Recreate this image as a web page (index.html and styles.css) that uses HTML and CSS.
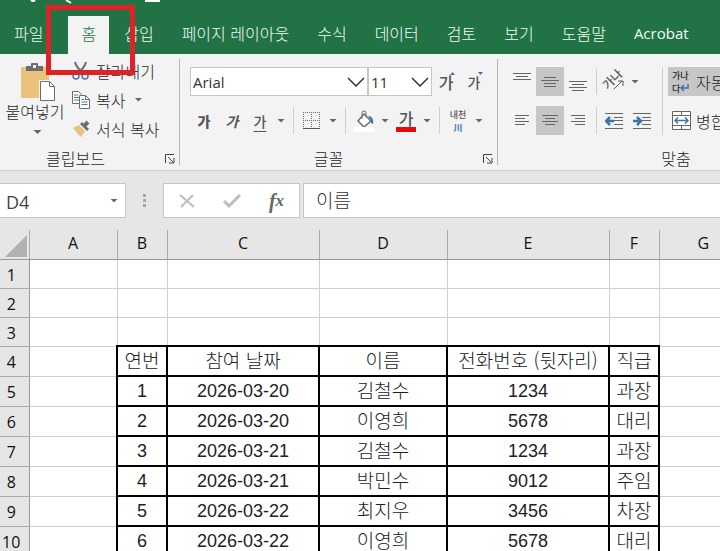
FILE: index.html
```html
<!DOCTYPE html>
<html lang="ko">
<head>
  <meta charset="UTF-8" />
  <meta name="viewport" content="width=device-width, initial-scale=1" />
  <title>참여 명단</title>
  <link rel="stylesheet" href="styles.css">
</head>
<body>

<header class="titlebar">
  <svg class="quick" width="170" height="4" viewBox="0 0 170 4">
    <path d="M31 0q2 2 4 0M66 0l5 3M145 1h15" fill="none" stroke="#fff" stroke-width="2"/>
  </svg>
  <nav class="tabs">
    <a href="#" class="file">파일</a>
    <a href="#" class="active">홈</a>
    <a href="#">삽입</a>
    <a href="#">페이지 레이아웃</a>
    <a href="#">수식</a>
    <a href="#">데이터</a>
    <a href="#">검토</a>
    <a href="#">보기</a>
    <a href="#">도움말</a>
    <a href="#">Acrobat</a>
    <svg width="14" height="20" viewBox="0 0 14 20"><path d="M5 16v-3Q1 10 1 6.500a5.500 5.500 0 0 1 11 0Q12 10 8 13v3z" fill="none" stroke="#fff" stroke-width="1.500"/></svg>
  </nav>
</header>
<div class="highlight"></div>

<section class="ribbon">
  <div class="group clipboard">
    <div class="body">
      <button class="paste">
        <svg width="36" height="40" viewBox="0 0 36 40">
          <rect x="1" y="5" width="28" height="31" rx="1" fill="#eac27a"/>
          <path d="M6 4h5V2q0-1 1-1h5q1 0 1 1v2h5v5H6z" fill="#6d6d6d"/>
          <rect x="13" y="3" width="3" height="3" fill="#f3f3f3"/>
          <path d="M19 18h11l6 6v15H19z" fill="#f3f3f3"/>
          <path d="M20.500 19.500h9l5 5v14h-14z" fill="#fff" stroke="#6d6d6d"/>
          <path d="M29.500 19.500v5h5" fill="none" stroke="#6d6d6d"/>
        </svg>
        <span>붙여넣기</span>
        <i class="arrow"></i>
      </button>
      <div class="stack">
        <button>
          <svg width="18" height="20" viewBox="0 0 18 20">
            <path d="M3 1q1 5 8 11M14 1q-1 5-8 11" fill="none" stroke="#6d6d6d" stroke-width="2"/>
            <circle cx="4" cy="15" r="3" fill="none" stroke="#4a78a8" stroke-width="1.500"/>
            <circle cx="13" cy="15" r="3" fill="none" stroke="#4a78a8" stroke-width="1.500"/>
          </svg>
          <span>잘라내기</span>
        </button>
        <button>
          <svg width="18" height="20" viewBox="0 0 18 20">
            <path d="M.500 1.500h6l3 3v9h-9z" fill="#fff" stroke="#6d6d6d"/>
            <path d="M2 5h4M2 7.500h5M2 10h5" stroke="#4a78a8"/>
            <path d="M7.500 5.500h6l4 4v9h-10z" fill="#fff" stroke="#6d6d6d"/>
            <path d="M13.500 5.500v4h4" fill="none" stroke="#6d6d6d"/>
            <path d="M9.500 9.500h3M9.500 12h6M9.500 14.500h6" stroke="#4a78a8"/>
          </svg>
          <span>복사</span>
          <i class="arrow"></i>
        </button>
        <button>
          <svg width="18" height="20" viewBox="0 0 18 20">
            <path d="M1 9l6-3 6 6-4 6-3-3z" fill="#eac27a"/>
            <path d="M8 5l2-2 7 7-2 2z" fill="#6d6d6d"/>
            <path d="M12 7l4-4" stroke="#6d6d6d" stroke-width="4"/>
          </svg>
          <span>서식 복사</span>
        </button>
      </div>
    </div>
    <footer>
      <span>클립보드</span>
      <button class="launcher" aria-label="클립보드"><svg width="10" height="10" viewBox="0 0 10 10"><path d="M.500 9V.500H9M3 3l5 5M9 4v5H4" fill="none" stroke="#444"/></svg></button>
    </footer>
  </div>
  <div class="sep"></div>

  <div class="group font">
    <div class="body">
      <div class="row">
        <label class="combo name">
          <select aria-label="글꼴"><option>Arial</option></select>
          <svg width="18" height="10" viewBox="0 0 18 10"><path d="M1 1l8 8 8-8" fill="none" stroke="#333" stroke-width="1.500"/></svg>
        </label>
        <label class="combo size">
          <select aria-label="크기"><option>11</option></select>
          <svg width="18" height="10" viewBox="0 0 18 10"><path d="M1 1l8 8 8-8" fill="none" stroke="#333" stroke-width="1.500"/></svg>
        </label>
        <button class="tool grow">가<svg width="5" height="3" viewBox="0 0 5 3"><path d="M0 3L2.500 0 5 3z" fill="#3c74ad"/></svg></button>
        <button class="tool grow small">가<svg width="5" height="3" viewBox="0 0 5 3"><path d="M0 0h5L2.500 3z" fill="#3c74ad"/></svg></button>
      </div>
      <div class="row">
        <button class="tool bold">가</button>
        <button class="tool italic">가</button>
        <button class="tool underline">가</button>
        <i class="arrow"></i>
        <span class="bar"></span>
        <button class="tool" aria-label="테두리">
          <svg width="18" height="18" viewBox="0 0 18 18">
            <path d="M0 .500h17M0 8.500h17M.500 0v17M8.500 0v17M16.500 0v17" fill="none" stroke="#6d6d6d" stroke-dasharray="1 1"/>
            <path d="M0 16.500h17" stroke="#555"/>
          </svg>
        </button>
        <i class="arrow"></i>
        <span class="bar"></span>
        <button class="tool" aria-label="채우기 색">
          <svg width="20" height="22" viewBox="0 0 20 22">
            <path d="M10 4l7 7-7 6-6-6z" fill="#fff" stroke="#6d6d6d" stroke-width="1.500"/>
            <path d="M8 9V3q0-2 2-2t2 2v4" fill="none" stroke="#6d6d6d"/>
            <path d="M14 6q6 0 5 8-3-1-2-4z" fill="#3c74ad"/>
            <rect y="17" width="20" height="5" fill="#fff"/>
          </svg>
        </button>
        <i class="arrow"></i>
        <button class="tool color">가</button>
        <i class="arrow"></i>
        <span class="bar"></span>
        <button class="tool ruby"><span>내천</span><b>川</b></button>
        <i class="arrow"></i>
      </div>
    </div>
    <footer>
      <span>글꼴</span>
      <button class="launcher" aria-label="글꼴 설정"><svg width="10" height="10" viewBox="0 0 10 10"><path d="M.500 9V.500H9M3 3l5 5M9 4v5H4" fill="none" stroke="#444"/></svg></button>
    </footer>
  </div>
  <div class="sep"></div>

  <div class="group align">
    <div class="body">
      <div class="cols">
        <div class="row">
          <button class="tool" aria-label="위쪽 맞춤"><svg width="18" height="18" viewBox="0 0 18 18"><path d="M0 .500h18M3 3.500h12M0 6.500h18" stroke="#666"/></svg></button>
          <button class="tool on" aria-label="가운데 맞춤"><svg width="18" height="18" viewBox="0 0 18 18"><path d="M3 4.500h12M0 7.500h18M3 10.500h12M3 13.500h12" stroke="#666"/></svg></button>
          <button class="tool" aria-label="아래쪽 맞춤"><svg width="18" height="18" viewBox="0 0 18 18"><path d="M0 8.500h18M3 11.500h12M0 14.500h18M3 17.500h12" stroke="#666"/></svg></button>
          <span class="bar"></span>
          <button class="tool angle"><span>가나</span><svg width="11" height="10" viewBox="0 0 11 10"><path d="M1 9l8-8M5 1h5v5" fill="none" stroke="#555"/></svg></button>
          <i class="arrow"></i>
        </div>
        <div class="row">
          <button class="tool" aria-label="왼쪽 맞춤"><svg width="14" height="18" viewBox="0 0 14 18"><path d="M0 3.500h14M0 6.500h10M0 9.500h14M0 12.500h10" stroke="#666"/></svg></button>
          <button class="tool on" aria-label="텍스트 가운데"><svg width="16" height="18" viewBox="0 0 16 18"><path d="M0 3.500h16M3 6.500h10M0 9.500h16M3 12.500h10" stroke="#666"/></svg></button>
          <button class="tool" aria-label="오른쪽 맞춤"><svg width="14" height="18" viewBox="0 0 14 18"><path d="M0 3.500h14M4 6.500h10M0 9.500h14M4 12.500h10" stroke="#666"/></svg></button>
          <span class="bar"></span>
          <button class="tool" aria-label="내어쓰기"><svg width="18" height="18" viewBox="0 0 18 18"><path d="M0 1.500h18M9 5.500h9M9 8.500h9M9 12.500h9M0 16.500h18" stroke="#666"/><path d="M9 9H2M5 5L1 9l4 4" fill="none" stroke="#3c74ad" stroke-width="2.500"/></svg></button>
          <button class="tool" aria-label="들여쓰기"><svg width="18" height="18" viewBox="0 0 18 18"><path d="M0 1.500h18M9 5.500h9M9 8.500h9M9 12.500h9M0 16.500h18" stroke="#666"/><path d="M0 9h7M4 5l4 4-4 4" fill="none" stroke="#3c74ad" stroke-width="2.500"/></svg></button>
        </div>
      </div>
      <span class="bar tall"></span>
      <div class="cols wide">
        <button class="on wrap">
          <span class="wrapicon">가나<br>다<svg width="9" height="8" viewBox="0 0 9 8"><path d="M8 0v4H1M4 1L1 4l3 3" fill="none" stroke="#3c74ad" stroke-width="1.500"/></svg></span>
          <span>자동</span>
        </button>
        <button class="wrap">
          <svg width="20" height="20" viewBox="0 0 20 20">
            <path d="M.500.500h18v18H.500zM.500 4.500h18M.500 14.500h18M9.500.500v4M9.500 14.500v4" fill="#fff" stroke="#666"/>
            <path d="M3 9.500h13M6 6.500l-3 3 3 3M13 6.500l3 3-3 3" fill="none" stroke="#3c74ad" stroke-width="1.500"/>
          </svg>
          <span>병합</span>
        </button>
      </div>
    </div>
    <footer><span>맞춤</span></footer>
  </div>
</section>

<section class="formula">
  <label class="namebox"><input type="text" value="D4" aria-label="이름 상자"><i class="arrow"></i></label>
  <svg class="grip" width="4" height="14" viewBox="0 0 4 14"><path d="M0 0h3v3H0zM0 5h3v3H0zM0 10h3v3H0z" fill="#a6a6a6"/></svg>
  <div class="actions">
    <button aria-label="취소"><svg width="16" height="14" viewBox="0 0 16 14"><path d="M1 1l14 12M14 1L2 13" stroke="#bdbdbd" stroke-width="2"/></svg></button>
    <button aria-label="입력"><svg width="18" height="14" viewBox="0 0 18 14"><path d="M1 7l5 5L17 1" fill="none" stroke="#bdbdbd" stroke-width="3"/></svg></button>
    <button class="fx">f<small>x</small></button>
  </div>
  <input class="content" type="text" value="이름" aria-label="수식 입력줄">
</section>

<main class="sheet">
  <table>
    <colgroup>
      <col class="num"><col class="a"><col class="b"><col class="c"><col class="d"><col class="e"><col class="f"><col>
    </colgroup>
    <thead>
      <tr><th class="corner"><svg width="22" height="22" viewBox="0 0 22 22"><path d="M22 0v22H0z" fill="#b2b2b2"/></svg></th><th>A</th><th>B</th><th>C</th><th>D</th><th>E</th><th>F</th><th>G</th></tr>
    </thead>
    <tbody>
      <tr class="blank"><th>1</th><td></td><td></td><td></td><td></td><td></td><td></td><td></td></tr>
      <tr class="blank"><th>2</th><td></td><td></td><td></td><td></td><td></td><td></td><td></td></tr>
      <tr class="blank"><th>3</th><td></td><td></td><td></td><td></td><td></td><td></td><td></td></tr>
      <tr><th>4</th><td></td><td class="x">연번</td><td class="x">참여 날짜</td><td class="x">이름</td><td class="x">전화번호 (뒷자리)</td><td class="x">직급</td><td></td></tr>
      <tr><th>5</th><td></td><td class="x n">1</td><td class="x n">2026-03-20</td><td class="x">김철수</td><td class="x n">1234</td><td class="x">과장</td><td></td></tr>
      <tr><th>6</th><td></td><td class="x n">2</td><td class="x n">2026-03-20</td><td class="x">이영희</td><td class="x n">5678</td><td class="x">대리</td><td></td></tr>
      <tr><th>7</th><td></td><td class="x n">3</td><td class="x n">2026-03-21</td><td class="x">김철수</td><td class="x n">1234</td><td class="x">과장</td><td></td></tr>
      <tr><th>8</th><td></td><td class="x n">4</td><td class="x n">2026-03-21</td><td class="x">박민수</td><td class="x n">9012</td><td class="x">주임</td><td></td></tr>
      <tr><th>9</th><td></td><td class="x n">5</td><td class="x n">2026-03-22</td><td class="x">최지우</td><td class="x n">3456</td><td class="x">차장</td><td></td></tr>
      <tr><th>10</th><td></td><td class="x n">6</td><td class="x n">2026-03-22</td><td class="x">이영희</td><td class="x n">5678</td><td class="x">대리</td><td></td></tr>
    </tbody>
  </table>
</main>

</body>
</html>
```
FILE: styles.css
```css
* {
  box-sizing: border-box;
}
body {
  margin: 0;
  height: 100vh;
  overflow: hidden;
  display: flex;
  flex-direction: column;
  position: relative;
  font-family: "Open Sans", "Noto Sans CJK KR", sans-serif;
  font-size: 16px;
  line-height: 20px;
  color: #262626;
  background: #fff;
}
button {
  font: inherit;
  color: inherit;
  background: none;
  border: none;
  padding: 0;
  margin: 0;
  white-space: nowrap;
}
svg {
  display: block;
  flex: none;
}

/* green bar */
.titlebar {
  background: #217346;
  flex: none;
}
.quick {
  height: 4px;
}
.tabs {
  display: flex;
  gap: 2px;
  padding: 12px 0 0 1px;
  overflow: hidden;
}
.tabs a {
  flex: none;
  padding: 7px 13px 11px;
  color: #f3fbf5;
  text-decoration: none;
  font-family: "Noto Sans CJK KR", sans-serif;
  font-weight: 300;
}
.tabs a:last-of-type {
  font-family: "Open Sans", sans-serif;
  font-size: 15px;
  font-weight: 400;
}
.tabs .file {
  margin-right: 10px;
}
.tabs .active {
  background: #f3f3f3;
  color: #217346;
}
.tabs svg {
  margin: 10px 0 0 16px;
}
.highlight {
  position: absolute;
  left: 46px;
  top: 5px;
  width: 89px;
  height: 70px;
  border: 5px solid #df2227;
  z-index: 2;
  pointer-events: none;
}

/* ribbon */
.ribbon {
  display: flex;
  flex: none;
  background: #f3f3f3;
  border-bottom: 1px solid #d0d0d0;
  overflow: hidden;
  font-family: "Noto Sans CJK KR", sans-serif;
  font-weight: 300;
}
.group {
  flex: none;
  display: flex;
  flex-direction: column;
}
.sep {
  width: 1px;
  margin: 5px 0;
  background: #b4b4b4;
  flex: none;
}
.body {
  height: 93px;
}
.group footer {
  display: grid;
  grid-template-columns: 1fr 20px;
  align-items: center;
  text-align: center;
  height: 23px;
  padding-bottom: 2px;
}
.clipboard footer {
  grid-template-columns: 1fr 28px;
}
.align footer {
  grid-template-columns: 1fr;
}
.launcher {
  justify-self: end;
  margin: 2px 4px 0 0;
}
.arrow {
  flex: none;
  width: 14px;
  height: 4px;
  background: #666;
  clip-path: polygon(3px 0, 11px 0, 7px 4px);
}
.clipboard {
  width: 179px;
}
.clipboard .body {
  display: flex;
}
.paste {
  width: 72px;
  display: flex;
  flex-direction: column;
  align-items: center;
  padding: 8px 2px 0 0;
}
.paste svg {
  margin-left: 5px;
}
.paste .arrow {
  margin-left: 5px;
}
.paste span {
  margin-bottom: 9px;
  line-height: 19px;
}
.stack {
  padding-top: 2px;
}
.stack button {
  display: flex;
  align-items: center;
  height: 29px;
  gap: 6px;
}
.row {
  display: flex;
  align-items: center;
  height: 29px;
}
.row + .row,
.wrap + .wrap {
  margin-top: 10px;
}
.font {
  width: 317px;
}
.font .body {
  padding: 13px 0 0 10px;
}
.combo {
  position: relative;
  height: 29px;
}
.combo select {
  appearance: none;
  width: 100%;
  height: 100%;
  padding: 0 2px;
  border: 1px solid #c6c6c6;
  border-radius: 0;
  background: #fff;
  color: #333;
  font-family: "Open Sans", sans-serif;
  font-size: 15px;
}
.combo svg {
  position: absolute;
  right: 3px;
  top: 10px;
  pointer-events: none;
}
.name {
  width: 178px;
}
.size {
  width: 64px;
}
.tool {
  flex: none;
  width: 28px;
  height: 29px;
  display: flex;
  align-items: center;
  justify-content: center;
  color: #555;
  font-size: 14px;
}
.on {
  background: #c6c6c6;
}
.grow {
  position: relative;
  font-size: 16px;
  font-weight: 500;
}
.grow svg {
  position: absolute;
  right: 5px;
  top: 5px;
}
.small {
  font-size: 14px;
}
.bold {
  font-weight: 900;
}
.italic {
  font-style: italic;
  font-weight: 700;
}
.underline {
  text-decoration: underline;
  text-underline-offset: 4px;
  font-weight: 500;
}
.color {
  width: 20px;
  height: 22px;
  margin: 0 4px;
  font-size: 16px;
  font-weight: 500;
  line-height: 16px;
  border-bottom: 5px solid #e60a0a;
}
.ruby {
  flex-direction: column;
  font-size: 9px;
  font-weight: 500;
  line-height: 13px;
}
.ruby b {
  color: #3c74ad;
  font-size: 9px;
}
.bar {
  width: 1px;
  height: 27px;
  margin: 0 5px;
  background: #d0d0d0;
  flex: none;
}
.font .bar {
  margin: 0 4px 0 5px;
}
.align {
  width: 356px;
}
.align .body {
  display: flex;
  padding: 13px 0 0 10px;
}
.align .bar {
  margin: 0 3px 0 4px;
}
.align .tall {
  height: 68px;
  margin: 0 5px 0 6px;
}
.angle {
  position: relative;
  font-size: 12px;
  font-weight: 500;
  line-height: 12px;
}
.angle span {
  transform: rotate(-45deg);
  margin: 0 4px 6px 0;
}
.angle svg {
  position: absolute;
  right: 4px;
  bottom: 6px;
}
.wide {
  flex: 1;
}
.wrap {
  width: 100%;
  height: 29px;
  display: flex;
  align-items: center;
  gap: 4px;
  padding-left: 4px;
}
.wrapicon {
  width: 20px;
  text-align: left;
  font-size: 9px;
  line-height: 13px;
  font-weight: 500;
}
.wrapicon svg {
  display: inline-block;
}

/* formula bar */
.formula {
  flex: none;
  display: flex;
  align-items: center;
  padding: 12px 0;
  background: #e6e6e6;
}
.namebox,
.actions,
.content {
  height: 35px;
  background: #fff;
  border: 1px solid #c6c6c6;
}
.namebox {
  display: flex;
  align-items: center;
  width: 126px;
  border-left: none;
  padding-right: 4px;
}
.namebox input {
  flex: 1;
  min-width: 0;
  border: none;
  padding: 3px 0 0 6px;
  font: 18px "Open Sans", sans-serif;
  color: #444;
}
.grip {
  margin: 0 16px 0 17px;
}
.actions {
  display: flex;
  align-items: center;
  width: 137px;
  margin-right: 3px;
}
.actions button {
  flex: 1;
  display: flex;
  justify-content: center;
}
.actions .fx {
  font: italic bold 20px/20px "Liberation Serif", serif;
  color: #666;
}
.fx small {
  font-size: 17px;
}
.content {
  flex: 1;
  min-width: 0;
  border-right: none;
  padding: 0 12px 2px;
  font: 300 19px "Noto Sans CJK KR", sans-serif;
  color: #333;
}

/* grid */
.sheet {
  flex: 1;
  min-height: 0;
  overflow: hidden;
}
table {
  border-collapse: collapse;
  table-layout: fixed;
  width: 100%;
  min-width: 748px;
}
.num { width: 29px; }
.a { width: 88px; }
.b, .f { width: 50px; }
.c { width: 152px; }
.d { width: 128px; }
.e { width: 162px; }
th,
td {
  padding: 0;
  border: 1px solid #d0d0d0;
  text-align: center;
  font-weight: 400;
  white-space: nowrap;
}
th {
  background: #e6e6e6;
  border-color: #ababab;
  color: #111;
}
thead th {
  border-top: none;
  border-bottom-color: #999;
  padding-bottom: 2px;
}
tbody th {
  border-left: none;
  border-right-color: #999;
  padding: 2px 6px 0 0;
}
thead .corner {
  border-left: none;
  padding: 0;
}
.corner svg {
  margin: 3px 0 0 5px;
}
tr {
  height: 30px;
}
thead tr,
.blank {
  height: 29px;
}
td {
  font-family: "Noto Sans CJK KR", sans-serif;
  font-size: 19px;
  font-weight: 300;
  color: #222;
}
td.x {
  border: 2px solid #000;
  padding-bottom: 2px;
}
td.n {
  font-family: "Liberation Sans", sans-serif;
  font-size: 18px;
  font-weight: 400;
  padding-bottom: 0;
}
```
